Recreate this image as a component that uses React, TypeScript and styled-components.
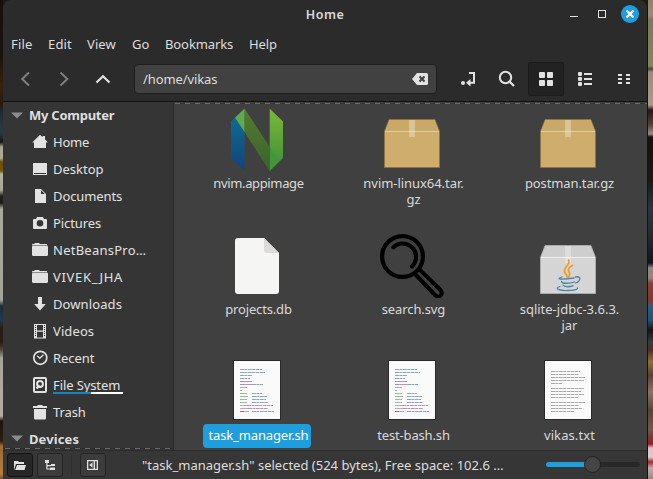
import React from 'react';
import styled, { createGlobalStyle } from 'styled-components';

const Global = createGlobalStyle`
  * { box-sizing: border-box; }
  body { margin: 0; background: #1b1a19; overflow: hidden; }
`;

const Desktop = styled.div`
  display: grid;
  grid-template-columns: 3px 645px 5px;
  width: 653px;
  height: 479px;
  overflow: hidden;
  font: 13px/16px 'Noto Sans', 'Open Sans', sans-serif;
  color: #dedede;
`;

const WallLeft = styled.div`
  background: linear-gradient(#14100e 0, #1b120d 55px, #3a200f 85px, #2b180d 105px, #1d2b35 112px,
    #2a3b48 132px, #14171a 142px, #aaa491 147px, #b1aa98 158px, #6d4d0c 162px, #76550f 171px,
    #b5b09f 174px, #aaa594 190px, #24211e 196px, #1d1b19 203px, #aaa99d 209px, #a3a398 300px,
    #1d2c38 306px, #22394c 320px, #2a1c15 328px, #2b1d14 343px, #55473a 350px, #a5a49b 358px,
    #b0ada4 416px, #1d1510 421px, #2c1c10 441px, #9c6a36 446px, #b37d43 474px, #6e4d2c 479px);
`;

const WallRight = styled.div`
  background: linear-gradient(#8f8069 0, #9c8b70 15px, #77795a 20px, #85865f 66px, #3c4b35 69px,
    #9a8c78 72px, #a89b87 105px, #2a1614 110px, #4b4036 124px, #968d80 134px, #17110e 137px,
    #1a1817 180px, #263840 208px, #292a30 235px, #10161d 263px, #8b8b81 268px, #8c887e 278px,
    #8b4034 283px, #80392d 300px, #235f82 307px, #1d567a 320px, #141413 330px, #343d3d 342px,
    #4d3020 350px, #8f7136 362px, #5b4032 375px, #8d7063 392px, #574634 410px, #6e5b47 430px,
    #7b3630 438px, #a31920 444px, #d8c6c8 448px, #ddcdd0 457px, #a5262b 462px, #c2b0a8 468px, #958879 479px);
`;

const Window = styled.main`
  display: grid;
  grid-template-rows: 29px 32px 41px minmax(0, 1fr) 29px;
  height: 479px;
  border-right: 1px solid #131313;
  border-radius: 8px 8px 0 0;
  background: #2b2b2b;
  overflow: hidden;
`;

const TitleBar = styled.header`
  display: grid;
  grid-template-columns: 1fr auto 1fr;
  align-items: center;
`;
const Title = styled.h1`
  margin: 0;
  font-size: 12.5px;
  font-weight: 600;
  letter-spacing: 0.5px;
  line-height: 28px;
  color: #dadada;
`;
const Controls = styled.div`
  display: flex;
  justify-content: flex-end;
  height: 29px;
`;

const Tracked = styled.span<{ $ls?: number }>`
  letter-spacing: ${(p) => p.$ls ?? 0}px;
  white-space: nowrap;
`;

const MenuBar = styled.nav`
  display: flex;
  gap: 16px;
  padding: 7px 0 0 8px;
`;
const MenuItem = styled(Tracked)<{ $w: number }>`
  width: ${(p) => p.$w}px;
`;

const Toolbar = styled.div`
  display: flex;
  gap: 3px;
  padding: 1px 5px 0 4px;
  border-bottom: 1px solid #111;
`;
const ToolButton = styled.button<{ $active?: boolean; $dim?: boolean }>`
  width: 36px;
  height: 34px;
  padding: 0;
  border: 0;
  border-radius: 3px;
  background: ${(p) => (p.$active ? '#222' : 'transparent')};
  box-shadow: ${(p) => (p.$active ? 'inset 0 0 0 1px #1c1c1c' : 'none')};
  color: ${(p) => (p.$dim ? '#7f7f7f' : '#e2e2e2')};
  svg { display: block; }
`;
const PathEntry = styled.div`
  display: flex;
  align-items: center;
  justify-content: space-between;
  width: 303px;
  height: 30px;
  margin: 2px 10px 0;
  padding: 0 8px;
  border: 1px solid #1e1e1e;
  border-radius: 4px;
  background: #414141;
  line-height: 28px;
`;

const Body = styled.div`
  display: grid;
  grid-template-columns: 171px minmax(0, 1fr);
  min-height: 0;
  overflow: hidden;
`;
const Sidebar = styled.aside`
  display: flex;
  flex-direction: column;
  height: 348px;
  overflow: hidden;
  background: linear-gradient(90deg, #696969 50%, #2d2d2d 50%) 2px 346px / 10px 1px repeat-x, #353535;
  border-right: 1px solid #2a2a2a;
`;
const Section = styled.div<{ $first?: boolean }>`
  display: flex;
  flex: 0 0 ${(p) => (p.$first ? 26 : 27)}px;
  align-items: center;
  gap: 6px;
  padding-left: 8px;
  font-weight: 700;
`;
const Place = styled.div`
  display: flex;
  flex: 0 0 27px;
  align-items: center;
  gap: 5px;
  padding-left: 29px;
  color: #e2e2e2;
  svg { display: block; flex: none; }
`;
const PlaceLabel = styled(Tracked)<{ $marked?: boolean }>`
  position: relative;
  ${(p) =>
    p.$marked &&
    `&::after {
      content: '';
      position: absolute;
      left: 0;
      top: 15px;
      width: 70px;
      height: 2px;
      background: linear-gradient(90deg, #1b82bd 54%, #fff 54%);
    }`}
`;

const Files = styled.section`
  display: grid;
  grid-template-columns: 156px 154px 158px;
  grid-auto-rows: 126px;
  padding: 6px 0 0 5px;
  height: 348px;
  overflow: hidden;
  background: linear-gradient(90deg, #6a6a6a 50%, #353535 50%) 1px 1px / 10px 1px repeat-x, #404040;
`;
const File = styled.figure`
  display: flex;
  flex-direction: column;
  align-items: center;
  margin: 0;
  svg { display: block; flex: none; }
`;
const FileName = styled.figcaption<{ $ls?: number; $selected?: boolean }>`
  padding: 3px 3px 5px 6px;
  border-radius: 4px;
  text-align: center;
  white-space: pre-line;
  letter-spacing: ${(p) => p.$ls ?? 0}px;
  background: ${(p) => (p.$selected ? '#1f9ede' : 'transparent')};
  color: ${(p) => (p.$selected ? '#fff' : '#dadada')};
`;

const StatusBar = styled.footer`
  display: flex;
  align-items: center;
  padding-left: 4px;
  border-top: 1px solid #2c2c2c;
  background: #363636;
`;
const StatusButton = styled.button<{ $active?: boolean }>`
  width: 26px;
  height: 24px;
  margin: 0 4px 0 0;
  padding: 0;
  border: 1px solid ${(p) => (p.$active ? '#141414' : '#242424')};
  border-radius: 3px;
  background: ${(p) => (p.$active ? '#272727' : '#3c3c3c')};
  color: #e2e2e2;
  svg { display: block; }
`;
const Separator = styled.div`
  width: 1px;
  height: 22px;
  margin: 0 8px 0 4px;
  background: #2f2f2f;
`;
const StatusText = styled.div`
  width: 403px;
  margin-left: 32px;
  white-space: nowrap;
`;

const ArrowDown = () => (
  <svg width="12" height="7"><path d="M0 0.5H12L6 6.5Z" fill="#8c8c8c" /></svg>
);

const placeIcons: Record<string, React.ReactNode> = {
  home: <path d="M8 0.8L10.6 3.2V2H13V5.3L15.8 8.4H14V14H2V8.4H0.2Z" />,
  desktop: <path fillRule="evenodd" d="M1.5 2H14.5Q15 2 15 2.5V13.5Q15 14 14.5 14H1.5Q1 14 1 13.5V2.5Q1 2 1.5 2ZM2 12V13H14V12Z" />,
  document: <path fillRule="evenodd" d="M3 1H9L14 6V15H3ZM9 2.2V6H12.8Z" />,
  camera: <path fillRule="evenodd" d="M5 2H11L12 4H14Q15 4 15 5V13Q15 14 14 14H2Q1 14 1 13V5Q1 4 2 4H4ZM8 5A3.3 3.3 0 1 0 8 11.6A3.3 3.3 0 1 0 8 5Z" />,
  folder: <path d="M0 3.4V2.5Q0 2 .6 2H2L3 1H7L8 2H14.4Q15 2 15 2.6V3.2H16V3.4ZM.6 4H15.4Q16 4 16 4.6V12.4Q16 14 14.4 14H1.6Q0 14 0 12.4V4.6Q0 4 .6 4Z" />,
  download: <path d="M6 1H10V8H13.8L8 14.6L2.2 8H6Z" />,
  video: <path fillRule="evenodd" d="M2 1H14V15.5H2ZM5 2V7.5H11V2ZM5 8.7V14.5H11V8.7ZM3 2V3H4V2ZM3 4V5H4V4ZM3 6V7H4V6ZM3 8V9H4V8ZM3 10V11H4V10ZM3 12V13H4V12ZM12 2V3H13V2ZM12 4V5H13V4ZM12 6V7H13V6ZM12 8V9H13V8ZM12 10V11H13V10ZM12 12V13H13V12Z" />,
  recent: <g fill="none" stroke="currentColor"><circle cx="8.3" cy="7.8" r="6.5" strokeWidth="1.7" /><path d="M5 5.6L7.8 8.3L11.4 4.8" strokeWidth="1.3" /></g>,
  disk: <g fill="none" stroke="currentColor"><rect x="2" y="1" width="12" height="14" rx="1" strokeWidth="2" /><circle cx="8" cy="7" r="2.9" strokeWidth="2" /><path d="M4.5 11.5L7.5 8.2" strokeWidth="2.4" /></g>,
  trash: <path d="M1 2H5.5V1H10.5V2H15V4H1ZM2 5H14V14.2Q14 15.5 12.8 15.5H3.2Q2 15.5 2 14.2Z" />,
};

const places: [string, string, number][] = [
  ['home', 'Home', -0.25],
  ['desktop', 'Desktop', 0],
  ['document', 'Documents', -0.1],
  ['camera', 'Pictures', -0.1],
  ['folder', 'NetBeansPro…', 0.25],
  ['folder', 'VIVEK_JHA', 0.7],
  ['download', 'Downloads', 0.1],
  ['video', 'Videos', 0.1],
  ['recent', 'Recent', -0.05],
  ['disk', 'File System', -0.1],
  ['trash', 'Trash', -0.1],
];

const menus: [string, number, number][] = [
  ['File', 21, 0.2],
  ['Edit', 23, 0.15],
  ['View', 29, 0.1],
  ['Go', 17, 0],
  ['Bookmarks', 68, -0.1],
  ['Help', 30, -0.1],
];

const NvimIcon = () => (
  <svg width="64" height="64" viewBox="0 0 64 64">
    <defs>
      <linearGradient id="nb" x1="0" y1="0" x2="0" y2="1"><stop stopColor="#0f6a93" /><stop offset="1" stopColor="#10447c" /></linearGradient>
      <linearGradient id="ng" x1="0" y1="0" x2="0" y2="1"><stop stopColor="#7cb938" /><stop offset="1" stopColor="#3d8c3b" /></linearGradient>
      <linearGradient id="nd" x1="0" y1="0" x2="0" y2="1"><stop stopColor="#547d2b" /><stop offset="1" stopColor="#3b6130" /></linearGradient>
    </defs>
    <path d="M6 13.5L10 9.5L19.5 24V63L6 50Z" fill="url(#nb)" />
    <path d="M44.5 0.5L58 13.5V50L44.5 63Z" fill="url(#ng)" />
    <path d="M19.5 0.5L44.5 38.5V63L19.5 24Z" fill="url(#nd)" />
    <path d="M19.5 0.5V24L10 9.7Z" fill="#60aa52" />
    <path d="M44.5 38.5L54 53.5L44.5 63Z" fill="#44963a" />
    <path d="M44.5 1V63" stroke="#406b2a" strokeWidth="1" />
  </svg>
);

const Box = ({ jar }: { jar?: boolean }) => (
  <svg width="64" height="64" viewBox="0 0 64 64">
    <path d="M9.2 11.5H54.8L59.5 23.5V59.5H4.5V23.5Z" fill={jar ? '#d5d5d5' : '#cfae6d'} stroke={jar ? '#aaa' : '#8c7445'} />
    <path d="M9.5 12H54.5L59 23H5Z" fill={jar ? '#cecece' : '#caa968'} />
    <path d="M5 23.5H59" stroke={jar ? '#efefef' : '#e2cda0'} />
    <path d="M29 12H35V29H29Z" fill="#fff" opacity="0.3" />
    {jar && (
      <g fill="none" strokeLinecap="round">
        <path d="M32.5 26C35 31 27.5 32.5 28.5 37.5C29 40 31.2 40.5 31.2 43M36.5 31.5C32 34 31.5 35.5 33.2 38.2C34.5 40.2 33.3 42 32.3 43" stroke="#f59a23" strokeWidth="1.7" />
        <g stroke="#4a84a8" strokeWidth="1.3">
          <path d="M26 43C19 45 25 46 38 44M25.5 47.5C26 50 34 49.5 38.5 48M27 51C28.5 53.5 34 53 37 51.6" />
          <path d="M39.5 43C46 41.5 44.5 47.5 39.5 49" />
          <path d="M24 52.5C17 54.5 24 57 32 56.5C37 56.5 42 55.5 41.5 53.8" />
        </g>
      </g>
    )}
  </svg>
);

const DocIcon = () => (
  <svg width="64" height="64" viewBox="0 0 64 64">
    <path d="M13 4H39L54 19V57Q54 60 51 60H13Q10 60 10 57V7Q10 4 13 4Z" fill="#f5f5f3" />
    <path d="M39 4L54 19H42Q39 19 39 16Z" fill="#dcdbd7" />
  </svg>
);

const MagnifierIcon = () => (
  <svg width="64" height="64" viewBox="0 0 64 64" fill="none" stroke="#000">
    <circle cx="22.5" cy="22.5" r="20.4" strokeWidth="4.2" />
    <path d="M13.4 13.3A13 13 0 0 1 32 32.4" strokeWidth="4.2" strokeLinecap="round" />
    <path d="M40 36L60.5 56A3.5 3.5 0 0 1 55.5 61.5L35.5 40.5" strokeWidth="4" />
  </svg>
);

type Dash = [number, number, number, string];
const B = '#86a9bf', P = '#cb8bb9', V = '#b183d0', G = '#8bc988', K = '#b0b0b0';
const code: Dash[] = [
  [6, 8.5, 22, B], [6, 11.5, 25, B], [6, 14.5, 12, B], [6, 17.5, 10, B],
  [6, 20.5, 4, V], [10, 20.5, 8, P], [6, 23.5, 4, V], [10, 23.5, 8, P], [18, 23.5, 11, B],
  [6, 26.5, 5, G], [11, 26.5, 2, K], [6, 29.5, 2, K],
  [6, 32.5, 4, G], [10, 32.5, 3, K], [18, 32.5, 10, B],
  [6, 35.5, 5, G], [11, 35.5, 3, K], [18, 35.5, 15, B],
  [6, 38.5, 4, G], [10, 38.5, 3, K], [18, 38.5, 14, B],
  [6, 41.5, 4, G], [10, 41.5, 3, K], [18, 41.5, 16, B],
  [6, 44.5, 7, K], [13, 44.5, 26, P], [6, 47.5, 8, K], [14, 47.5, 20, P],
  [6, 50.5, 4, '#cc5970'], [10, 50.5, 5, K], [18, 50.5, 22, B],
];
const prose: Dash[] = ([
  [10.5, 29], [13.5, 28], [16.5, 34], [19.5, 33], [22.5, 11], [27.5, 33], [30.5, 30], [33.5, 33],
  [36.5, 27], [41.5, 34], [44.5, 28], [47.5, 31], [50.5, 23],
] as [number, number][]).map(([y, w]) => [6, y, w, '#aaaaaa']);

const Thumb = ({ lines }: { lines: Dash[] }) => (
  <svg width="64" height="64" viewBox="0 0 64 64">
    <rect x="8" y="0" width="48" height="60" fill="#292929" />
    <rect x="9" y="1" width="46" height="58" fill="#fafafa" />
    {lines.map(([x, y, w, c], i) => (
      <path key={i} d={`M${x + 9} ${y + 1}h${w}`} stroke={c} strokeDasharray={w > 8 ? '4 .4 3 .4' : undefined} />
    ))}
  </svg>
);

const files: { name: string; ls?: number; icon: React.ReactNode; selected?: boolean }[] = [
  { name: 'nvim.appimage', ls: -0.35, icon: <NvimIcon /> },
  { name: 'nvim-linux64.tar.\ngz', ls: -0.05, icon: <Box /> },
  { name: 'postman.tar.gz', ls: -0.1, icon: <Box /> },
  { name: 'projects.db', ls: -0.15, icon: <DocIcon /> },
  { name: 'search.svg', ls: -0.1, icon: <MagnifierIcon /> },
  { name: 'sqlite-jdbc-3.6.3.\njar', icon: <Box jar /> },
  { name: 'task_manager.sh', ls: -0.14, icon: <Thumb lines={code} />, selected: true },
  { name: 'test-bash.sh', ls: -0.15, icon: <Thumb lines={code} /> },
  { name: 'vikas.txt', ls: 0.1, icon: <Thumb lines={prose} /> },
];

const Glyph = ({ children }: { children: React.ReactNode }) => (
  <svg width="36" height="34" viewBox="0 0 36 34" fill="none" stroke="currentColor" strokeWidth="2">{children}</svg>
);
const StatusGlyph = ({ children }: { children: React.ReactNode }) => (
  <svg width="24" height="22" viewBox="0 0 24 22" fill="currentColor">{children}</svg>
);

export default function App() {
  return (
    <Desktop>
      <Global />
      <WallLeft />
      <Window>
        <TitleBar>
          <span />
          <Title>Home</Title>
          <Controls>
            <svg width="84" height="29" viewBox="0 0 84 29">
              <path d="M7 16.5H15" stroke="#e4e4e4" />
              <rect x="35.5" y="10.5" width="7" height="7" fill="none" stroke="#e4e4e4" />
              <circle cx="67" cy="14" r="9" fill="#1f9ede" />
              <path d="M63.5 10.5L70.5 17.5M70.5 10.5L63.5 17.5" stroke="#fff" strokeWidth="2.3" />
            </svg>
          </Controls>
        </TitleBar>
        <MenuBar>
          {menus.map(([t, w, ls]) => <MenuItem key={t} $w={w} $ls={ls}>{t}</MenuItem>)}
        </MenuBar>
        <Toolbar>
          <ToolButton $dim aria-label="Back"><Glyph><path d="M22 10.5L15.2 17L22 23.5" /></Glyph></ToolButton>
          <ToolButton $dim aria-label="Forward"><Glyph><path d="M14.5 10.5L21.3 17L14.5 23.5" /></Glyph></ToolButton>
          <ToolButton aria-label="Up"><Glyph><path d="M11.5 20.5L18 14.2L24.5 20.5" strokeWidth="2.2" /></Glyph></ToolButton>
          <PathEntry>
            <Tracked $ls={-0.1}>/home/vikas</Tracked>
            <svg width="16" height="12" viewBox="0 0 16 12">
              <path d="M5 0H14.5Q16 0 16 1.5V10.5Q16 12 14.5 12H5L0 6Z" fill="#e2e2e2" />
              <path d="M7.5 3.5L12.5 8.5M12.5 3.5L7.5 8.5" stroke="#414141" strokeWidth="2" />
            </svg>
          </PathEntry>
          <ToolButton aria-label="Toggle location">
            <Glyph>
              <circle cx="13" cy="21" r="2" fill="currentColor" stroke="none" />
              <path d="M19 11H24V20.7H18.5" />
              <path d="M16 20.7L20.5 17V24.4Z" fill="currentColor" stroke="none" />
            </Glyph>
          </ToolButton>
          <ToolButton aria-label="Search"><Glyph><circle cx="16.5" cy="15.5" r="5.7" /><path d="M20.5 19.5L25 24" strokeWidth="2.2" /></Glyph></ToolButton>
          <ToolButton $active aria-label="Icon view">
            <Glyph>
              <g fill="currentColor" stroke="none">
                <rect x="11" y="10" width="6" height="6" rx="1" /><rect x="19" y="10" width="6" height="6" rx="1" />
                <rect x="11" y="18" width="6" height="6" rx="1" /><rect x="19" y="18" width="6" height="6" rx="1" />
              </g>
            </Glyph>
          </ToolButton>
          <ToolButton aria-label="List view">
            <Glyph>
              <g fill="currentColor" stroke="none">
                <rect x="11" y="10" width="4" height="4" rx="1" /><rect x="11" y="15" width="4" height="4" rx="1" /><rect x="11" y="20" width="4" height="4" rx="1" />
              </g>
              <path d="M17 12H25M17 17H25M17 22H25" />
            </Glyph>
          </ToolButton>
          <ToolButton aria-label="Compact view">
            <Glyph><path d="M12 13H16M20 13H24M12 17H16M20 17H24M12 21H16M20 21H24" /></Glyph>
          </ToolButton>
        </Toolbar>
        <Body>
          <Sidebar>
            <Section $first><ArrowDown /><Tracked $ls={-0.25}>My Computer</Tracked></Section>
            {places.map(([icon, name, ls]) => (
              <Place key={name}>
                <svg width="16" height="16" viewBox="0 0 16 16" fill="currentColor">{placeIcons[icon]}</svg>
                <PlaceLabel $ls={ls} $marked={name === 'File System'}>{name}</PlaceLabel>
              </Place>
            ))}
            <Section><ArrowDown /><Tracked $ls={0.1}>Devices</Tracked></Section>
          </Sidebar>
          <Files>
            {files.map((f) => (
              <File key={f.name}>
                {f.icon}
                <FileName $ls={f.ls} $selected={f.selected}>{f.name}</FileName>
              </File>
            ))}
          </Files>
        </Body>
        <StatusBar>
          <StatusButton $active aria-label="Places">
            <StatusGlyph><path d="M6 7H10L11 8H16V10H8L6.5 14.5V15.5H6ZM9 11H18L16.5 16H7.2Z" /></StatusGlyph>
          </StatusButton>
          <StatusButton aria-label="Treeview">
            <StatusGlyph><path d="M7 6H11V9H9.5V11H13V10H17V12H13V12.2H9.5V14.5H12V13.5H17V16H12V15.5H8.3V9H7Z" /></StatusGlyph>
          </StatusButton>
          <Separator />
          <StatusButton aria-label="Hide sidebar">
            <StatusGlyph><path fillRule="evenodd" d="M6 6H17V16H6ZM7.3 7.3V14.7H12.6V7.3ZM14 7.3V14.7H15.7V7.3Z" /><path d="M11.5 8.2V13.8L8.3 11Z" /></StatusGlyph>
          </StatusButton>
          <StatusText>"task_manager.sh" selected (524 bytes), Free space: 102.6 …</StatusText>
          <svg width="96" height="20" viewBox="0 0 96 20">
            <rect x="1" y="7" width="94" height="5" rx="2.5" fill="#282828" />
            <rect x="1" y="7" width="46" height="5" rx="2.5" fill="#1f9ede" />
            <circle cx="47.5" cy="9.5" r="8" fill="#454545" stroke="#212121" />
          </svg>
        </StatusBar>
      </Window>
      <WallRight />
    </Desktop>
  );
}
